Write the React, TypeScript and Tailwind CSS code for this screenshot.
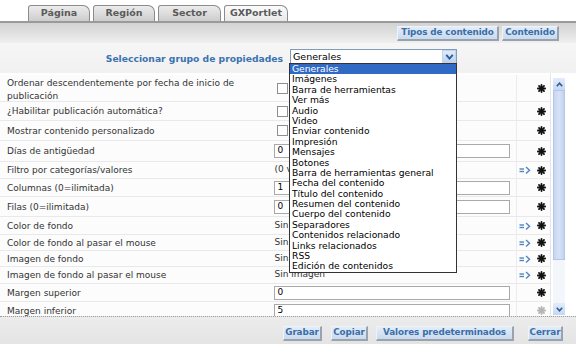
import React from "react";

type Row = {
  label: React.ReactNode;
  h: string;
  kind: "check" | "input" | "text";
  value?: string;
  arrow?: boolean;
  faded?: boolean;
};

const rows: Row[] = [
  { label: <>Ordenar descendentemente por fecha de inicio de<br />publicación</>, h: "h-[27px]", kind: "check" },
  { label: "¿Habilitar publicación automática?", h: "h-[19px]", kind: "check" },
  { label: "Mostrar contenido personalizado", h: "h-[20px]", kind: "check" },
  { label: "Días de antigüedad", h: "h-[21px]", kind: "input", value: "0" },
  { label: "Filtro por categorías/valores", h: "h-[17px]", kind: "text", value: "(0 valores)", arrow: true },
  { label: "Columnas (0=ilimitada)", h: "h-[18px]", kind: "input", value: "1" },
  { label: "Filas (0=ilimitada)", h: "h-[20px]", kind: "input", value: "0" },
  { label: "Color de fondo", h: "h-[18px]", kind: "text", value: "Sin color", arrow: true },
  { label: "Color de fondo al pasar el mouse", h: "h-[16px]", kind: "text", value: "Sin color", arrow: true },
  { label: "Imagen de fondo", h: "h-[16px]", kind: "text", value: "Sin imagen", arrow: true },
  { label: "Imagen de fondo al pasar el mouse", h: "h-[17px]", kind: "text", value: "Sin imagen", arrow: true },
  { label: "Margen superior", h: "h-[18px]", kind: "input", value: "0" },
  { label: "Margen inferior", h: "h-[18px]", kind: "input", value: "5", faded: true },
];

const options = [
  "Generales",
  "Imágenes",
  "Barra de herramientas",
  "Ver más",
  "Audio",
  "Video",
  "Enviar contenido",
  "Impresión",
  "Mensajes",
  "Botones",
  "Barra de herramientas general",
  "Fecha del contenido",
  "Título del contenido",
  "Resumen del contenido",
  "Cuerpo del contenido",
  "Separadores",
  "Contenidos relacionado",
  "Links relacionados",
  "RSS",
  "Edición de contenidos",
];

function Star({ faded }: { faded?: boolean }) {
  return (
    <svg width="9" height="9" viewBox="0 0 10 10" className={faded ? "opacity-30" : ""}>
      <g stroke="#111" strokeWidth="2" strokeLinecap="round">
        <line x1="5" y1="1" x2="5" y2="9" />
        <line x1="1" y1="5" x2="9" y2="5" />
        <line x1="2.2" y1="2.2" x2="7.8" y2="7.8" />
        <line x1="7.8" y1="2.2" x2="2.2" y2="7.8" />
      </g>
    </svg>
  );
}

function Arrow() {
  return (
    <svg width="12" height="8" viewBox="0 0 12 8">
      <g stroke="#4f86c6" strokeWidth="1.4" fill="none">
        <line x1="0.5" y1="3" x2="5" y2="3" />
        <line x1="0.5" y1="5.5" x2="5" y2="5.5" />
        <polyline points="7,1 10.5,4.2 7,7.4" />
      </g>
    </svg>
  );
}

function Chevron({ up, big }: { up?: boolean; big?: boolean }) {
  return (
    <svg width={big ? 9 : 7} height={big ? 6 : 5} viewBox="0 0 7 5">
      <polyline
        points={up ? "0.8,4.2 3.5,1.2 6.2,4.2" : "0.8,0.8 3.5,3.8 6.2,0.8"}
        stroke="#2c5a9c"
        strokeWidth="1.6"
        fill="none"
      />
    </svg>
  );
}

function Tab({ label, active, w }: { label: string; active?: boolean; w: string }) {
  return (
    <div
      className={`${w} h-[16px] flex items-center justify-center border border-b-0 border-[#8c8c8c] rounded-tl-[3px] rounded-tr-[7px] text-[9.5px] font-bold text-[#5a5a5a] whitespace-nowrap ${
        active ? "bg-gradient-to-b from-[#fbfbfb] to-[#e9e9e9]" : "bg-gradient-to-b from-[#ececec] to-[#cdcdcd]"
      }`}
    >
      {label}
    </div>
  );
}

function Btn({ label, w }: { label: string; w: string }) {
  return (
    <div
      className={`${w} h-[15px] flex items-center justify-center whitespace-nowrap bg-gradient-to-b from-[#e3edf8] to-[#c9dbef] border-r-2 border-b-2 border-[#9aa3ad] border-t border-l border-t-[#eef3f9] border-l-[#eef3f9] text-[8.8px] tracking-[-0.1px] font-bold text-[#3b6ea8]`}
    >
      {label}
    </div>
  );
}

export default function App() {
  return (
    <div className="relative w-[576px] h-[344px] overflow-hidden bg-white font-['DejaVu_Sans',Verdana,sans-serif] text-[9px] text-[#333]">
      {/* Tabs */}
      <div className="h-[23px] flex items-end pl-[28px] gap-[3px] border-b-2 border-[#9a9a9a]">
        <Tab label="Página" w="w-[62px]" />
        <Tab label="Región" w="w-[62px]" />
        <Tab label="Sector" w="w-[63px]" />
        <Tab label="GXPortlet" w="w-[64px]" active />
      </div>
      {/* Toolbar */}
      <div className="h-[20px] bg-gradient-to-b from-[#d2d2d2] to-[#efefef] flex items-center justify-end pr-[17px] gap-[3px]">
        <Btn label="Tipos de contenido" w="w-[102px]" />
        <Btn label="Contenido" w="w-[57px]" />
      </div>
      {/* Selector */}
      <div className="h-[30px] bg-gradient-to-b from-[#f6f6f6] to-[#f1f1f1] flex items-start pt-[6px]">
        <div className="w-[290px] text-right pr-[7px] pt-[3px] text-[9.2px] font-bold text-[#3b72b0] whitespace-nowrap">
          Seleccionar grupo de propiedades
        </div>
        <div className="w-[167px] h-[15px] border border-[#7f9db9] bg-white flex items-center">
          <span className="flex-1 pl-[2px] text-[9.5px] text-black leading-none">Generales</span>
          <div className="w-[14px] h-[13px] bg-gradient-to-b from-[#e2ecf9] to-[#bcd1f0] border border-[#c3d3ea] flex items-center justify-center">
            <Chevron big />
          </div>
        </div>
      </div>
      {/* Table */}
      <div className="h-[243px] overflow-hidden flex bg-white">
        <div className="w-[551px] pt-[2px] border-r border-[#e6e6e6]">
          {rows.map((r, i) => (
            <div key={i} className={`${r.h} flex border-b border-[#e9e9e9] bg-[#fcfcfc]`}>
              <div
                className={`w-[273px] pl-[7px] flex items-center text-[#333] ${
                  i === 0 ? "leading-[13px] pt-[4px]" : "leading-[12px]"
                }`}
              >
                {r.label}
              </div>
              <div className="w-[244px] flex items-center pl-[1px]">
                {r.kind === "check" && (
                  <div className="ml-[3px] w-[11px] h-[11px] border border-[#8f8f8f] bg-white" />
                )}
                {r.kind === "input" && (
                  <div className="w-[236px] h-[14px] border border-[#a9a9a9] bg-white flex items-center pl-[3px] text-black">
                    {r.value}
                  </div>
                )}
                {r.kind === "text" && <span className="pl-[1px] text-[#333] whitespace-nowrap">{r.value}</span>}
              </div>
              <div className="w-[16px] flex items-center justify-center border-l border-[#ececec]">
                {r.arrow && <Arrow />}
              </div>
              <div className="w-[18px] flex items-center justify-center">
                <Star faded={r.faded} />
              </div>
            </div>
          ))}
        </div>
        {/* Scrollbar */}
        <div className="w-[25px] pt-[5px] pl-[2px]">
          <div className="w-[12px] h-[237px] flex flex-col bg-[#f3f6fb]">
            <div className="h-[12px] bg-gradient-to-b from-[#e3ecf9] to-[#c5d7f2] flex items-center justify-center">
              <Chevron up />
            </div>
            <div className="h-[170px] bg-gradient-to-r from-[#c7d6f3] via-[#d6e2f7] to-[#c2d2f0] border border-[#b3c6ea]" />
            <div className="flex-1" />
            <div className="h-[12px] bg-gradient-to-b from-[#e3ecf9] to-[#c5d7f2] flex items-center justify-center">
              <Chevron />
            </div>
          </div>
        </div>
      </div>
      {/* Footer */}
      <div className="h-[28px] border-t border-dotted border-[#9c9c9c] bg-gradient-to-b from-[#ececec] to-[#e4e4e4] flex items-center pt-[5px]">
        <div className="ml-[283px]">
          <Btn label="Grabar" w="w-[39px]" />
        </div>
        <div className="ml-[9px]">
          <Btn label="Copiar" w="w-[37px]" />
        </div>
        <div className="ml-[8px]">
          <Btn label="Valores predeterminados" w="w-[138px]" />
        </div>
        <div className="ml-[14px]">
          <Btn label="Cerrar" w="w-[35px]" />
        </div>
      </div>
      {/* Dropdown list */}
      <div className="absolute left-[289px] top-[63px] w-[168px] h-[210px] border border-[#333] bg-white flex flex-col">
        {options.map((o, i) => (
          <div
            key={o}
            className={`h-[10.4px] leading-[10.4px] pl-[2px] text-[9.2px] whitespace-nowrap ${i === 0 ? "bg-[#316ac5] text-white" : "text-black"}`}
          >
            {o}
          </div>
        ))}
      </div>
    </div>
  );
}
